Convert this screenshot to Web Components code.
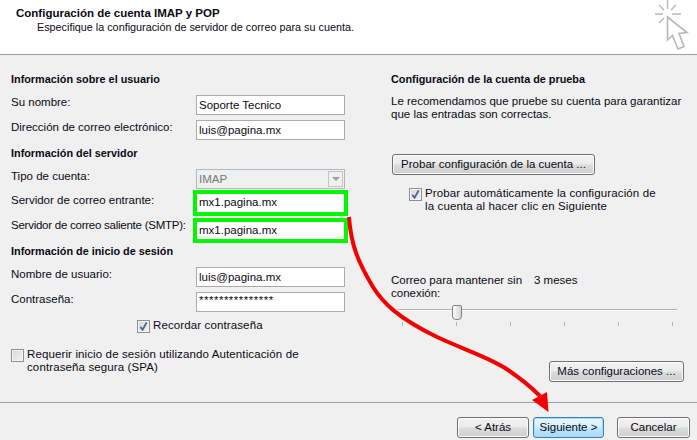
<!DOCTYPE html>
<html lang="es">
<head>
<meta charset="UTF-8">
<title>Configuración de cuenta IMAP y POP</title>
<style>
  html, body { margin: 0; padding: 0; }
  body { width: 697px; height: 440px; overflow: hidden; font: 11.5px/13px "Liberation Sans", Arial, sans-serif; color: #0a0a14; background: #f0f0f0; }
</style>
</head>
<body>

<account-dialog>
  <div slot="left">
    <section-title>Información sobre el usuario</section-title>
    <form-field style="margin-top:9px" label="Su nombre:" value="Soporte Tecnico"></form-field>
    <form-field style="margin-top:5px" label="Dirección de correo electrónico:" value="luis@pagina.mx"></form-field>
    <section-title style="margin-top:6px">Información del servidor</section-title>
    <form-field style="margin-top:9px" label="Tipo de cuenta:" value="IMAP" kind="select"></form-field>
    <form-field style="margin-top:5px;height:18px;--label-shift:-1px;--mark:4px" label="Servidor de correo entrante:" value="mx1.pagina.mx" highlight></form-field>
    <form-field style="margin-top:10px;height:16px;--label-shift:-4px;--label-spacing:-.25px;--mark:4px" label="Servidor de correo saliente (SMTP):" value="mx1.pagina.mx" highlight></form-field>
    <section-title style="margin-top:6px">Información de inicio de sesión</section-title>
    <form-field style="margin-top:9px" label="Nombre de usuario:" value="luis@pagina.mx"></form-field>
    <form-field style="margin-top:5px" label="Contraseña:" value="***************" kind="password"></form-field>
    <check-box checked style="margin:7px 0 0 126px">Recordar contraseña</check-box>
    <check-box style="margin-top:15px">Requerir inicio de sesión utilizando Autenticación de<br>contraseña segura (SPA)</check-box>
  </div>
  <div slot="right">
    <section-title>Configuración de la cuenta de prueba</section-title>
    <p style="margin:9px 0 0">Le recomendamos que pruebe su cuenta para garantizar<br>que las entradas son correctas.</p>
    <win-button style="margin:33px 0 0 1px;width:203px">Probar configuración de la cuenta ...</win-button>
    <check-box checked style="margin:12px 0 0 18px">Probar automáticamente la configuración de<br>la cuenta al hacer clic en Siguiente</check-box>
    <offline-slider style="margin-top:61px"></offline-slider>
    <div style="display:flex;justify-content:flex-end;margin-top:35px">
      <win-button style="width:135px">Más configuraciones ...</win-button>
    </div>
  </div>
  <win-button slot="footer" style="width:72px">&lt; Atrás</win-button>
  <win-button slot="footer" default style="width:71px;margin-left:4px">Siguiente &gt;</win-button>
  <win-button slot="footer" style="width:73px;margin-left:13px">Cancelar</win-button>
</account-dialog>

<script>
class AccountDialog extends HTMLElement {
  constructor() {
    super();
    this.attachShadow({ mode: 'open' }).innerHTML = `
      <style>
        :host { display: flex; flex-direction: column; position: relative; width: 697px; height: 440px; }
        header { height: 54px; box-sizing: content-box; background: #fff; border-bottom: 1px solid #a0a0a0; position: relative; }
        h1 { margin: 0; padding: 6px 0 0 16px; font-size: 11.5px; line-height: 14px; font-weight: bold; }
        header p { margin: 0 0 0 37px; font-size: 10.8px; line-height: 14px; }
        header svg { position: absolute; left: 650px; top: 0; }
        main { flex: 1; display: grid; grid-template-columns: 334px 293px; column-gap: 46px; padding: 17px 0 0 11px; }
        footer { height: 23px; padding: 14px 7px 0 0; border-top: 1px solid #a0a0a0; display: flex; justify-content: flex-end; }
        .arrow { position: absolute; left: 0; top: 0; pointer-events: none; }
      </style>
      <header>
        <h1>Configuración de cuenta IMAP y POP</h1>
        <p>Especifique la configuración de servidor de correo para su cuenta.</p>
        <svg width="47" height="54" viewBox="650 0 47 54" fill="none" stroke="#b8b8b8" stroke-width="1.4">
          <path d="M667.5 0V9M655 14H663M672 14H681M659 5L664 10M676 5L671 10M659 23L664 18" />
          <path d="M667.5 17V40L672.5 35.5L678 49L684 46.5L679 33.5L687 32.5Z" stroke-width="1.6" fill="#fff"/>
        </svg>
      </header>
      <main>
        <div><slot name="left"></slot></div>
        <div><slot name="right"></slot></div>
      </main>
      <footer><slot name="footer"></slot></footer>
      <svg class="arrow" width="697" height="440" fill="none">
        <path d="M349 217C351 245 358 262 373 287C383 303 398 318 437 337C465 350 490 358 505 368C520 378 530 386 540 396" stroke="#f40000" stroke-width="4"/>
        <path d="M532 400L547 392L548.500 412Z" fill="#f40000"/>
      </svg>`;
  }
}

class SectionTitle extends HTMLElement {
  constructor() {
    super();
    this.attachShadow({ mode: 'open' }).innerHTML = `
      <style>:host { display: block; height: 14px; font-size: 10.85px; line-height: 14px; font-weight: bold; }</style>
      <slot></slot>`;
  }
}

class FormField extends HTMLElement {
  connectedCallback() {
    const select = this.getAttribute('kind') === 'select';
    const root = this.shadowRoot || this.attachShadow({ mode: 'open' });
    root.innerHTML = `
      <style>
        :host { display: grid; grid-template-columns: 185px 149px; height: 20px; }
        label { line-height: 14px; transform: translateY(var(--label-shift, 0)); letter-spacing: var(--label-spacing, 0); white-space: nowrap; }
        .box { position: relative; box-sizing: border-box; height: 100%; background: #fff; border: 1px solid #ababab; padding-left: 2px; line-height: 18px; white-space: nowrap; }
        :host([highlight]) .box { border: 0; margin: 0 1px; outline: var(--mark, 4px) solid #00f800; line-height: 17px; }
        :host([kind=select]) .box { background: #f0f0f0; border-color: #aeb9c4; color: #777; }
        :host([kind=password]) .box { line-height: 15px; letter-spacing: .5px; }
        .drop { position: absolute; right: 1px; top: 1px; bottom: 1px; width: 15px; box-sizing: border-box; border: 1px solid #c4c4c4; background: #f0f0f0; display: flex; align-items: center; justify-content: center; }
        .drop i { border: 4px solid transparent; border-top: 4px solid #a0a0a0; border-bottom: 0; }
      </style>
      <label>${this.getAttribute('label')}</label>
      <div class="box">${this.getAttribute('value')}${select ? '<span class="drop"><i></i></span>' : ''}</div>`;
  }
}

class CheckBox extends HTMLElement {
  constructor() {
    super();
    this.attachShadow({ mode: 'open' }).innerHTML = `
      <style>
        :host { display: flex; gap: 3px; line-height: 13px; letter-spacing: .12px; white-space: nowrap; }
        .mark { flex: none; box-sizing: border-box; width: 13px; height: 13px; margin-top: 1px; border: 1px solid #8e8f8f; background: linear-gradient(135deg, #d6d6d6, #f4f4f4); box-shadow: inset 0 0 0 1px #f4f4f4; }
        svg { display: none; }
        :host([checked]) svg { display: block; }
      </style>
      <span class="mark"><svg width="11" height="11" viewBox="0 0 12 12" fill="none"><path d="M2.500 6.500L5 9.500L9.500 1.500" stroke="#4a649e" stroke-width="2"/></svg></span>
      <span><slot></slot></span>`;
  }
}

class WinButton extends HTMLElement {
  constructor() {
    super();
    this.attachShadow({ mode: 'open' }).innerHTML = `
      <style>
        :host { display: flex; box-sizing: border-box; height: 21px; align-items: center; justify-content: center; white-space: nowrap; border: 1px solid #707070; border-radius: 3px; background: linear-gradient(#f2f2f2 0, #ebebeb 48%, #dcdcdc 52%, #cfcfcf 100%); box-shadow: inset 0 0 0 1px #fbfbfb; }
        :host([default]) { border-color: #3c7fb1; background: linear-gradient(#eaf6fd 0, #d9f0fc 48%, #bee6fd 52%, #a7d9f5 100%); box-shadow: inset 0 0 0 1px #9fe0ff; }
      </style>
      <slot></slot>`;
  }
}

class OfflineSlider extends HTMLElement {
  constructor() {
    super();
    this.attachShadow({ mode: 'open' }).innerHTML = `
      <style>
        :host { display: block; }
        .top { display: grid; grid-template-columns: 143px auto; line-height: 13px; white-space: nowrap; }
        .rail { position: relative; margin: 4px 0 0 7px; width: 279px; height: 22px; }
        .track { position: absolute; left: 0; right: 0; top: 5px; height: 1px; background: #b0b0b0; border-bottom: 1px solid #fff; }
        .thumb { position: absolute; left: 54px; top: 1px; width: 8px; height: 13px; border: 1px solid #808080; border-radius: 2px 2px 4px 4px; background: linear-gradient(90deg, #fafafa, #d8d8d8); }
        .ticks { position: absolute; left: 4px; right: 4px; top: 18px; display: flex; justify-content: space-between; }
        .ticks i { width: 1px; height: 4px; background: #b4b4b4; }
      </style>
      <div class="top"><span>Correo para mantener sin<br>conexión:</span><span>3 meses</span></div>
      <div class="rail">
        <div class="track"></div><div class="thumb"></div>
        <div class="ticks"><i></i><i></i><i></i><i></i><i></i><i></i></div>
      </div>`;
  }
}

customElements.define('account-dialog', AccountDialog);
customElements.define('section-title', SectionTitle);
customElements.define('form-field', FormField);
customElements.define('check-box', CheckBox);
customElements.define('win-button', WinButton);
customElements.define('offline-slider', OfflineSlider);
</script>
</body>
</html>
